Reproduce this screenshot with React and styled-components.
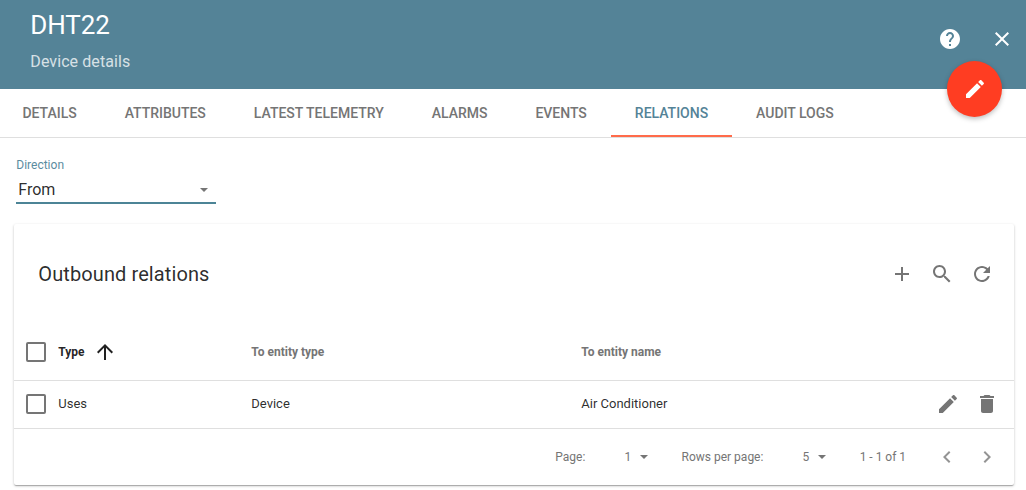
import React from 'react';
import styled, { createGlobalStyle } from 'styled-components';

const GlobalStyle = createGlobalStyle`
  * { box-sizing: border-box; }
  body {
    margin: 0;
    min-height: 490px;
    background: #fff;
    color: rgba(0, 0, 0, 0.84);
    font-family: Roboto, "Liberation Sans", sans-serif;
  }
`;

const paths = {
  help: 'M12 2C6.48 2 2 6.48 2 12s4.48 10 10 10 10-4.48 10-10S17.52 2 12 2zm1 17h-2v-2h2v2zm2.07-7.75l-.9.92C13.45 12.9 13 13.5 13 15h-2v-.5c0-1.1.45-2.1 1.17-2.83l1.24-1.26c.37-.36.59-.86.59-1.41 0-1.1-.9-2-2-2s-2 .9-2 2H8c0-2.21 1.79-4 4-4s4 1.79 4 4c0 .88-.36 1.68-.93 2.25z',
  close: 'M19 6.41L17.59 5 12 10.59 6.41 5 5 6.41 10.59 12 5 17.59 6.41 19 12 13.41 17.59 19 19 17.59 13.41 12z',
  edit: 'M3 17.25V21h3.75L17.81 9.94l-3.75-3.75L3 17.25zM20.71 7.04c.39-.39.39-1.02 0-1.41l-2.34-2.34c-.39-.39-1.02-.39-1.41 0l-1.83 1.83 3.75 3.75 1.83-1.83z',
  add: 'M19 13h-6v6h-2v-6H5v-2h6V5h2v6h6v2z',
  search: 'M15.5 14h-.79l-.28-.27C15.41 12.59 16 11.11 16 9.5 16 5.91 13.09 3 9.5 3S3 5.91 3 9.5 5.91 16 9.5 16c1.61 0 3.09-.59 4.23-1.57l.27.28v.79l5 4.99L20.49 19l-4.99-5zm-6 0C7.01 14 5 11.99 5 9.5S7.01 5 9.5 5 14 7.01 14 9.5 11.99 14 9.5 14z',
  refresh: 'M17.65 6.35C16.2 4.9 14.21 4 12 4c-4.42 0-7.99 3.58-7.99 8s3.57 8 7.99 8c3.73 0 6.84-2.55 7.73-6h-2.08c-.82 2.33-3.04 4-5.65 4-3.31 0-6-2.69-6-6s2.69-6 6-6c1.66 0 3.14.69 4.22 1.78L13 11h7V4l-2.35 2.35z',
  remove: 'M6 19c0 1.1.9 2 2 2h8c1.1 0 2-.9 2-2V7H6v12zM19 4h-3.5l-1-1h-5l-1 1H5v2h14V4z',
  up: 'M4 12l1.41 1.41L11 7.83V20h2V7.83l5.58 5.59L20 12l-8-8-8 8z',
  left: 'M15.41 7.41L14 6l-6 6 6 6 1.41-1.41L10.83 12z',
  right: 'M10 6L8.59 7.41 13.17 12l-4.58 4.59L10 18l6-6z',
};

const Svg = styled.svg`
  display: block;
  flex: none;
  width: 24px;
  height: 24px;
  fill: currentColor;
`;

const Icon = ({ name }) => (
  <Svg viewBox="0 0 24 24" aria-hidden="true">
    <path d={paths[name]} />
  </Svg>
);

const IconButton = styled.button`
  display: flex;
  padding: 0;
  border: 0;
  background: none;
  color: inherit;
`;

const Header = styled.header`
  position: relative;
  display: flex;
  justify-content: space-between;
  height: 89px;
  padding: 0 12px 0 30.3px;
  background: #548397;
  color: #fff;
`;

const Heading = styled.div`
  display: flex;
  flex-direction: column;
  padding-top: 9px;
`;

const Title = styled.h1`
  margin: 0;
  font-size: 26px;
  font-weight: 400;
  letter-spacing: -0.1px;
  line-height: 32px;
`;

const Subtitle = styled.span`
  margin-top: 11px;
  font-size: 16px;
  letter-spacing: 0.08px;
  line-height: 20px;
  opacity: 0.76;
`;

const HeaderActions = styled.div`
  display: flex;
  align-items: flex-start;
  gap: 28px;
  padding-top: 27px;
`;

const EditFab = styled.button`
  position: absolute;
  z-index: 1;
  right: 24px;
  bottom: -28px;
  display: flex;
  align-items: center;
  justify-content: center;
  width: 55px;
  height: 56px;
  padding: 0;
  border: 0;
  border-radius: 50%;
  background: #ff3d22;
  color: #fff;
  box-shadow: 0 2px 5px rgba(0, 0, 0, 0.26);
`;

const Tabs = styled.nav`
  display: flex;
  height: 49px;
  margin-left: -1.6px;
  border-bottom: 1px solid #dfdfdf;
`;

const Tab = styled.a`
  height: 48px;
  padding: 0 24px;
  border-bottom: 2px solid ${(p) => (p.$active ? '#ff6b4a' : 'transparent')};
  color: ${(p) => (p.$active ? '#548397' : '#757575')};
  font-size: 14px;
  font-weight: 500;
  letter-spacing: -0.015px;
  line-height: 48px;
  text-transform: uppercase;
  white-space: nowrap;
`;

const Field = styled.div`
  width: 200px;
  margin: 20px 0 0 16.3px;
  border-bottom: 2px solid #4c8496;
`;

const Label = styled.label`
  display: block;
  color: #5b8c9f;
  font-size: 12px;
  line-height: 14px;
`;

const Select = styled.div`
  display: flex;
  align-items: center;
  justify-content: space-between;
  height: 30px;
  padding: 5px 8px 0 2px;
  font-size: 16px;
  line-height: 20px;
`;

const Caret = styled.span`
  width: 0;
  height: 0;
  border: 4px solid transparent;
  border-top-color: #757575;
  border-bottom: 0;
`;

const Card = styled.section`
  width: 1000px;
  height: 261px;
  margin: 20px 0 0 14.3px;
  border-radius: 2px;
  background: #fff;
  box-shadow: 0 1px 3px rgba(0, 0, 0, 0.2), 0 1px 1px rgba(0, 0, 0, 0.14), 0 2px 1px -1px rgba(0, 0, 0, 0.12);
`;

const CardToolbar = styled.div`
  display: flex;
  align-items: center;
  justify-content: space-between;
  height: 100px;
  padding: 0 20px 0 24px;
`;

const CardTitle = styled.h2`
  margin: 0;
  font-size: 20px;
  font-weight: 400;
  letter-spacing: 0.1px;
`;

const CardActions = styled.div`
  display: flex;
  gap: 16px;
  color: #757575;
`;

const Row = styled.div`
  display: grid;
  grid-template-columns: 32px 193px 330px 1fr auto;
  align-items: center;
  height: ${(p) => (p.$head ? 57 : 48)}px;
  padding: 0 15.5px ${(p) => (p.$head ? 0 : 1)}px 12px;
  border-bottom: 1px solid #dfdfdf;
  color: ${(p) => (p.$head ? '#757575' : 'inherit')};
  font-size: ${(p) => (p.$head ? 12 : 13)}px;
  font-weight: ${(p) => (p.$head ? 700 : 400)};
  line-height: ${(p) => (p.$head ? 'normal' : '16px')};
`;

const Checkbox = styled.span`
  width: 20px;
  height: 20px;
  border: 2px solid #757575;
  border-radius: 2px;
`;

const SortedCell = styled.span`
  display: flex;
  align-items: center;
  gap: 8px;
  color: rgba(0, 0, 0, 0.87);
`;

const RowActions = styled.div`
  display: flex;
  gap: 15px;
  color: #757575;
`;

const Pager = styled.footer`
  display: flex;
  align-items: center;
  justify-content: flex-end;
  height: 56px;
  padding-right: 15.7px;
  color: #757575;
  font-size: 12px;
`;

const PagerValue = styled.span`
  display: flex;
  align-items: center;
  gap: 8.5px;
  margin: 0 33.8px 0 39.2px;
`;

const PagerNav = styled.div`
  display: flex;
  gap: 16px;
  margin-left: 28.5px;
  color: #949494;
`;

const tabs = ['Details', 'Attributes', 'Latest telemetry', 'Alarms', 'Events', 'Relations', 'Audit logs'];

export default function App() {
  return (
    <>
      <GlobalStyle />
      <Header>
        <Heading>
          <Title>DHT22</Title>
          <Subtitle>Device details</Subtitle>
        </Heading>
        <HeaderActions>
          <IconButton aria-label="Help"><Icon name="help" /></IconButton>
          <IconButton aria-label="Close"><Icon name="close" /></IconButton>
        </HeaderActions>
        <EditFab aria-label="Edit"><Icon name="edit" /></EditFab>
      </Header>
      <Tabs>
        {tabs.map((tab) => (
          <Tab key={tab} $active={tab === 'Relations'}>{tab}</Tab>
        ))}
      </Tabs>
      <Field>
        <Label>Direction</Label>
        <Select>From<Caret /></Select>
      </Field>
      <Card>
        <CardToolbar>
          <CardTitle>Outbound relations</CardTitle>
          <CardActions>
            <IconButton aria-label="Add"><Icon name="add" /></IconButton>
            <IconButton aria-label="Search"><Icon name="search" /></IconButton>
            <IconButton aria-label="Refresh"><Icon name="refresh" /></IconButton>
          </CardActions>
        </CardToolbar>
        <Row $head>
          <Checkbox />
          <SortedCell>Type<Icon name="up" /></SortedCell>
          <span>To entity type</span>
          <span>To entity name</span>
        </Row>
        <Row>
          <Checkbox />
          <span>Uses</span>
          <span>Device</span>
          <span>Air Conditioner</span>
          <RowActions>
            <IconButton aria-label="Edit relation"><Icon name="edit" /></IconButton>
            <IconButton aria-label="Delete relation"><Icon name="remove" /></IconButton>
          </RowActions>
        </Row>
        <Pager>
          <span>Page:</span>
          <PagerValue>1<Caret /></PagerValue>
          <span>Rows per page:</span>
          <PagerValue>5<Caret /></PagerValue>
          <span>1 - 1 of 1</span>
          <PagerNav>
            <IconButton aria-label="Previous page"><Icon name="left" /></IconButton>
            <IconButton aria-label="Next page"><Icon name="right" /></IconButton>
          </PagerNav>
        </Pager>
      </Card>
    </>
  );
}
